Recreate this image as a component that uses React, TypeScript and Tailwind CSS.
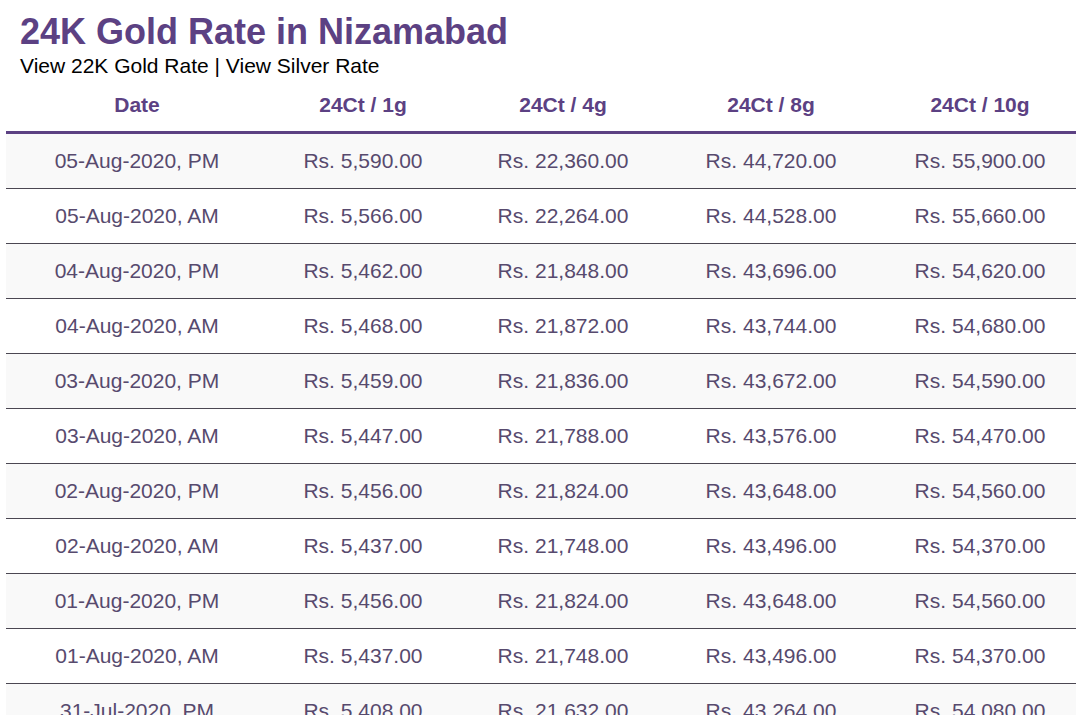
import React from 'react';

interface Rate {
  date: string;
  g1: string;
  g4: string;
  g8: string;
  g10: string;
}

const rates: Rate[] = [
  { date: '05-Aug-2020, PM', g1: '5,590.00', g4: '22,360.00', g8: '44,720.00', g10: '55,900.00' },
  { date: '05-Aug-2020, AM', g1: '5,566.00', g4: '22,264.00', g8: '44,528.00', g10: '55,660.00' },
  { date: '04-Aug-2020, PM', g1: '5,462.00', g4: '21,848.00', g8: '43,696.00', g10: '54,620.00' },
  { date: '04-Aug-2020, AM', g1: '5,468.00', g4: '21,872.00', g8: '43,744.00', g10: '54,680.00' },
  { date: '03-Aug-2020, PM', g1: '5,459.00', g4: '21,836.00', g8: '43,672.00', g10: '54,590.00' },
  { date: '03-Aug-2020, AM', g1: '5,447.00', g4: '21,788.00', g8: '43,576.00', g10: '54,470.00' },
  { date: '02-Aug-2020, PM', g1: '5,456.00', g4: '21,824.00', g8: '43,648.00', g10: '54,560.00' },
  { date: '02-Aug-2020, AM', g1: '5,437.00', g4: '21,748.00', g8: '43,496.00', g10: '54,370.00' },
  { date: '01-Aug-2020, PM', g1: '5,456.00', g4: '21,824.00', g8: '43,648.00', g10: '54,560.00' },
  { date: '01-Aug-2020, AM', g1: '5,437.00', g4: '21,748.00', g8: '43,496.00', g10: '54,370.00' },
  { date: '31-Jul-2020, PM', g1: '5,408.00', g4: '21,632.00', g8: '43,264.00', g10: '54,080.00' },
  { date: '31-Jul-2020, AM', g1: '5,401.00', g4: '21,604.00', g8: '43,208.00', g10: '54,010.00' },
];

const cols = 'grid grid-cols-[262px_190px_210px_206px_212px]';

export default function App() {
  return (
    <div className="h-[715px] w-[1076px] overflow-hidden bg-white font-['Liberation_Sans',Arial,sans-serif]">
      <div className="px-5 pt-3">
        <h1 className="text-[36px] leading-[40px] font-bold text-[#5c4183]">24K Gold Rate in Nizamabad</h1>
        <p className="mt-[2px] text-[21px] leading-6 text-black">
          View 22K Gold Rate | View Silver Rate
        </p>
      </div>
      <div className="ml-[6px] w-[1080px]">
        <div className={`${cols} h-[56px] items-center border-b-[3px] border-[#5c4183] text-[21px] leading-6 font-bold text-[#5c4183]`}>
          <div className="text-center">Date</div>
          <div className="text-center">24Ct / 1g</div>
          <div className="text-center">24Ct / 4g</div>
          <div className="text-center">24Ct / 8g</div>
          <div className="text-center">24Ct / 10g</div>
        </div>
        {rates.map((r, i) => (
          <div
            key={r.date}
            className={`${cols} h-[55px] items-center border-b border-[#4b4752] text-[21px] leading-6 text-[#574a6e] ${
              i % 2 === 0 ? 'bg-[#f9f9f9]' : 'bg-white'
            }`}
          >
            <div className="text-center">{r.date}</div>
            <div className="text-center">Rs. {r.g1}</div>
            <div className="text-center">Rs. {r.g4}</div>
            <div className="text-center">Rs. {r.g8}</div>
            <div className="text-center">Rs. {r.g10}</div>
          </div>
        ))}
      </div>
    </div>
  );
}
